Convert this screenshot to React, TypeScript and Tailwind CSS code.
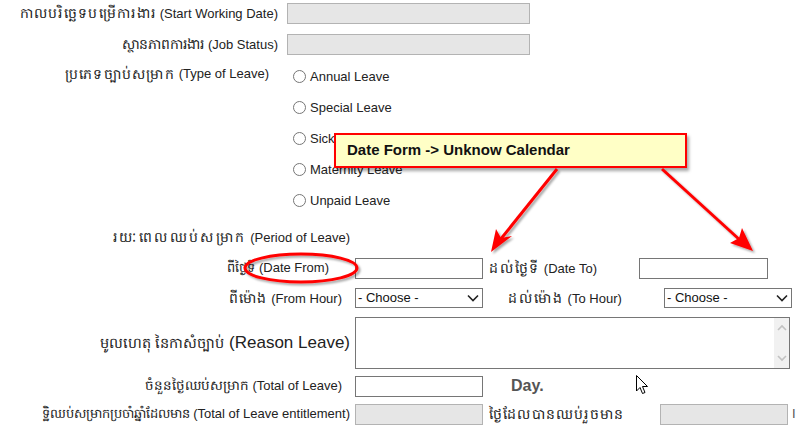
import React from 'react';

const leaveTypes = ['Annual Leave', 'Special Leave', 'Sick Leave', 'Maternity Leave', 'Unpaid Leave'];

const GrayBox = ({ w }: { w: string }) => (
  <div className={`h-[21px] ${w} border border-[#b3b3b3] bg-[#e6e6e6]`} />
);

const TextBox = ({ w }: { w: string }) => (
  <div className={`h-[21px] ${w} border border-[#767676] bg-white`} />
);

const Select = () => (
  <div className="flex h-[20px] w-[128px] items-center justify-between border border-[#767676] bg-white pl-[2px] pr-[3px] text-[13px] text-[#111]">
    <span>- Choose -</span>
    <svg width="12" height="8" viewBox="0 0 12 8">
      <path d="M1 1.5 L6 6.5 L11 1.5" fill="none" stroke="#222" strokeWidth="1.6" />
    </svg>
  </div>
);

const Radio = () => (
  <span className="inline-block h-[13px] w-[13px] rounded-full border border-[#767676] bg-white" />
);

// Khmer run; size and tracking tuned per label so the line widths follow the reference
const Kh = ({ c, children }: { c: string; children: React.ReactNode }) => (
  <span className={c}>{children}</span>
);

const App: React.FC = () => {
  return (
    <div className="relative h-[433px] w-[796px] overflow-hidden bg-white font-['Liberation_Sans',Arial,sans-serif] text-[13px] text-[#222]">
      {/* Top section */}
      <div className="flex h-[26px] items-center">
        <div className="w-[282px] pr-[4px] text-right whitespace-nowrap">
          <Kh c="text-[14px] tracking-[1.3px]">កាលបរិច្ឆេទបម្រើការងារ</Kh> (Start Working Date)
        </div>
        <div className="ml-[5px]"><GrayBox w="w-[243px]" /></div>
      </div>
      <div className="mt-[5px] flex h-[26px] items-center">
        <div className="w-[282px] pr-[4px] text-right whitespace-nowrap">
          <Kh c="text-[14px]">ស្ថានភាពការងារ</Kh> (Job Status)
        </div>
        <div className="ml-[5px]"><GrayBox w="w-[243px]" /></div>
      </div>
      <div className="mt-[4px] flex">
        <div className="flex h-[26px] w-[282px] items-center justify-end pr-[13px] whitespace-nowrap">
          <Kh c="text-[14px] tracking-[1.3px]">ប្រភេទច្បាប់សម្រាក</Kh>&nbsp;(Type of Leave)
        </div>
        <div className="ml-[11px] flex flex-col">
          {leaveTypes.map((t) => (
            <div key={t} className="flex h-[31px] items-center gap-[4px]">
              <Radio />
              <span>{t}</span>
            </div>
          ))}
        </div>
      </div>

      {/* Period of leave */}
      <div className="mt-[8px] flex h-[26px] items-center">
        <div className="w-[350px] text-right whitespace-nowrap">
          <Kh c="text-[14px] tracking-[2.4px]">រយៈពេលឈប់សម្រាក</Kh> (Period of Leave)
        </div>
      </div>
      <div className="mt-[5px] flex h-[26px] items-center">
        <div className="w-[350px] pr-[21px] text-right whitespace-nowrap">
          <Kh c="text-[13px]">ពីថ្ងៃទី</Kh> (Date From)
        </div>
        <div className="ml-[5px]"><TextBox w="w-[128px]" /></div>
        <div className="ml-[6px] w-[150px] whitespace-nowrap">
          <Kh c="text-[14px] tracking-[1.8px]">ដល់ថ្ងៃទី</Kh> (Date To)
        </div>
        <TextBox w="w-[129px]" />
      </div>
      <div className="mt-[4px] flex h-[26px] items-center">
        <div className="w-[350px] pr-[8px] text-right whitespace-nowrap">
          <Kh c="text-[14px] tracking-[1.2px]">ពីម៉ោង</Kh> (From Hour)
        </div>
        <div className="ml-[5px]"><Select /></div>
        <div className="ml-[25px] w-[156px] whitespace-nowrap">
          <Kh c="text-[14px] tracking-[2px]">ដល់ម៉ោង</Kh> (To Hour)
        </div>
        <Select />
      </div>

      {/* Reason */}
      <div className="mt-[6px] flex h-[52px] items-center">
        <div className="w-[350px] text-right text-[17px] whitespace-nowrap">
          <Kh c="text-[14.5px]">មូលហេតុ នៃកាសំច្បាប់</Kh> (Reason Leave)
        </div>
        <div className="ml-[5px] flex h-[52px] w-[435px] border border-[#767676] bg-white">
          <div className="flex-1" />
          <div className="flex w-[15px] flex-col items-center justify-between bg-[#f1f1f1] py-[6px]">
            <svg width="10" height="7" viewBox="0 0 10 7">
              <path d="M1 6 L5 2 L9 6" fill="none" stroke="#c2c2c2" strokeWidth="1.6" />
            </svg>
            <svg width="10" height="7" viewBox="0 0 10 7">
              <path d="M1 1 L5 5 L9 1" fill="none" stroke="#c2c2c2" strokeWidth="1.6" />
            </svg>
          </div>
        </div>
      </div>

      <div className="mt-[4px] flex h-[26px] items-center">
        <div className="w-[350px] pr-[8px] text-right whitespace-nowrap">
          <Kh c="text-[13.5px]">ចំនួនថ្ងៃឈប់សម្រាក</Kh> (Total of Leave)
        </div>
        <div className="ml-[5px]"><TextBox w="w-[128px]" /></div>
        <div className="ml-[28px] text-[16px] font-bold text-[#555]">Day.</div>
      </div>
      <div className="mt-[2px] flex h-[26px] items-center">
        <div className="flex w-[350px] justify-end whitespace-nowrap">
          <Kh c="text-[13px]">ទិ្ឋឈប់សម្រាកប្រចាំឆ្នាំដែលមាន</Kh>&nbsp;(Total of Leave entitlement)
        </div>
        <div className="ml-[5px]"><GrayBox w="w-[128px]" /></div>
        <div className="ml-[6px] w-[171px] whitespace-nowrap">
          <Kh c="text-[14px] tracking-[1.2px]">ថ្ងៃដែលបានឈប់រួចមាន</Kh>
        </div>
        <GrayBox w="w-[128px]" />
        <div className="ml-[4px] text-[#555]">I</div>
      </div>

      {/* Annotation overlay */}
      <div className="absolute left-[334px] top-[133px] flex h-[35px] w-[353px] items-center border-2 border-[#ff0000] bg-[#ffffc6] pl-[11px] text-[15px] font-bold text-[#111] shadow-[2px_3px_3px_rgba(0,0,0,0.35)]">
        Date Form -&gt; Unknow Calendar
      </div>
      <svg className="pointer-events-none absolute left-0 top-0" width="796" height="433" viewBox="0 0 796 433">
        <defs>
          <filter id="sh" x="-20%" y="-20%" width="140%" height="140%">
            <feDropShadow dx="2" dy="2" stdDeviation="1.2" floodColor="#000" floodOpacity="0.35" />
          </filter>
        </defs>
        <g filter="url(#sh)" stroke="#ff0000" fill="#ff0000">
          <line x1="557" y1="169" x2="500" y2="240" strokeWidth="3" />
          <path d="M491 252 L496 229 L501 238 L512 236 Z" stroke="none" />
          <line x1="662" y1="169" x2="741" y2="241" strokeWidth="3" />
          <path d="M753 251 L730 243 L739 238 L742 228 Z" stroke="none" />
          <ellipse cx="301" cy="268" rx="56" ry="14" fill="none" strokeWidth="3" />
        </g>
        <path
          d="M636.5 375.5 L636.5 391 L640 387.5 L642.5 393.5 L645 392.5 L642.5 386.5 L647.5 386.5 Z"
          fill="#fff"
          stroke="#000"
          strokeWidth="1"
          strokeLinejoin="round"
        />
      </svg>
    </div>
  );
};

export default App;
